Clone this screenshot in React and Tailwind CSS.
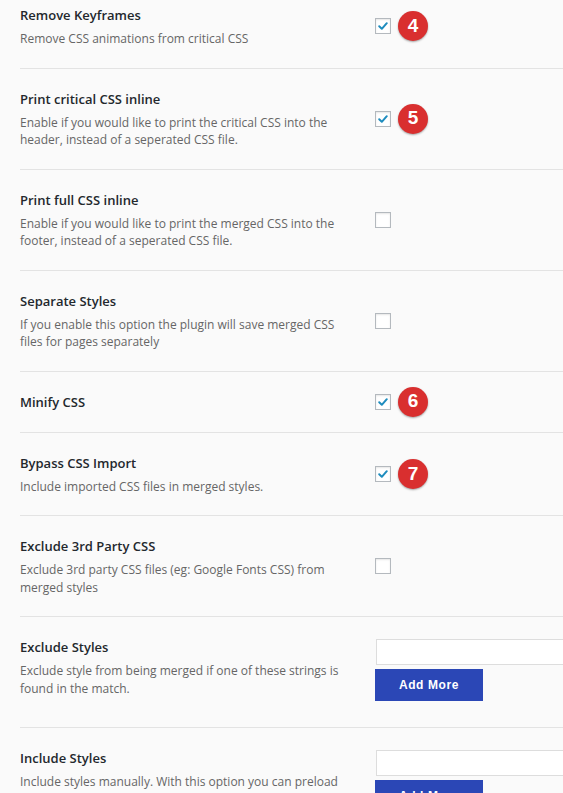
import { useState } from "react";

const rows = [
    { title: "Remove Keyframes", desc: "Remove CSS animations from critical CSS", checked: true, badge: 4 },
    { title: "Print critical CSS inline", desc: "Enable if you would like to print the critical CSS into the header, instead of a seperated CSS file.", checked: true, badge: 5 },
    { title: "Print full CSS inline", desc: "Enable if you would like to print the merged CSS into the footer, instead of a seperated CSS file.", checked: false },
    { title: "Separate Styles", desc: "If you enable this option the plugin will save merged CSS files for pages separately", checked: false },
    { title: "Minify CSS", checked: true, badge: 6 },
    { title: "Bypass CSS Import", desc: "Include imported CSS files in merged styles.", checked: true, badge: 7 },
    { title: "Exclude 3rd Party CSS", desc: "Exclude 3rd party CSS files (eg: Google Fonts CSS) from merged styles", checked: false },
    { title: "Exclude Styles", desc: "Exclude style from being merged if one of these strings is found in the match.", list: true },
    { title: "Include Styles", desc: "Include styles manually. With this option you can preload css files from 3rd party sources.", list: true },
];

function Checkbox({ checked, onChange }) {
    return (
        <button
            onClick={onChange}
            className="w-4 h-4 shrink-0 bg-white border border-[#b4b9be] shadow-[inset_0_1px_2px_rgba(0,0,0,0.1)] flex items-center justify-center"
        >
            {checked && (
                <svg width="12" height="12" viewBox="0 0 12 12">
                    <path d="M2.2 6.3 L4.8 8.8 L9.8 3.2" fill="none" stroke="#1e8cbe" strokeWidth="2" strokeLinecap="round" strokeLinejoin="round" />
                </svg>
            )}
        </button>
    );
}

function Badge({ n }) {
    return (
        <div className="w-[30px] h-[30px] shrink-0 rounded-full bg-[#d92f2f] shadow-[0_1px_2px_rgba(0,0,0,0.35)] flex items-center justify-center text-white text-[19px] font-bold font-['Liberation_Sans',sans-serif]">
            {n}
        </div>
    );
}

function Row({ row }) {
    const [checked, setChecked] = useState(row.checked);

    return (
        <div className={`flex border-b border-[#e3e3e3] py-5 ${row.list ? "items-start" : "items-center"}`}>
            <div className="w-[336px] shrink-0">
                <div className="text-[13px] leading-5 font-semibold text-[#23282d]">{row.title}</div>
                {row.desc && (
                    <p className="mt-[5px] text-[12px] leading-[17.5px] text-[#666]">{row.desc}</p>
                )}
            </div>
            {row.list ? (
                <div className="ml-5 mt-[2px] mb-[6px]">
                    <input className="block w-[220px] h-[26px] bg-white border border-[#ddd] outline-none" />
                    <button className="mt-[4px] -ml-[1px] w-[108px] h-8 bg-[#2b47b6] text-white text-[12px] font-bold tracking-[0.6px] font-['Liberation_Sans',sans-serif]">
                        Add More
                    </button>
                </div>
            ) : (
                <div className="ml-[19px] h-5 flex items-center gap-[7px]">
                    <Checkbox checked={checked} onChange={() => setChecked(!checked)} />
                    {row.badge && <Badge n={row.badge} />}
                </div>
            )}
        </div>
    );
}

export default function App() {
    return (
        <div className="w-[563px] h-[793px] overflow-hidden bg-[#fafafa] font-['Open_Sans',sans-serif]">
            <div className="pl-5 -mt-[15px]">
                {rows.map(row => (
                    <Row key={row.title} row={row} />
                ))}
            </div>
        </div>
    );
}
